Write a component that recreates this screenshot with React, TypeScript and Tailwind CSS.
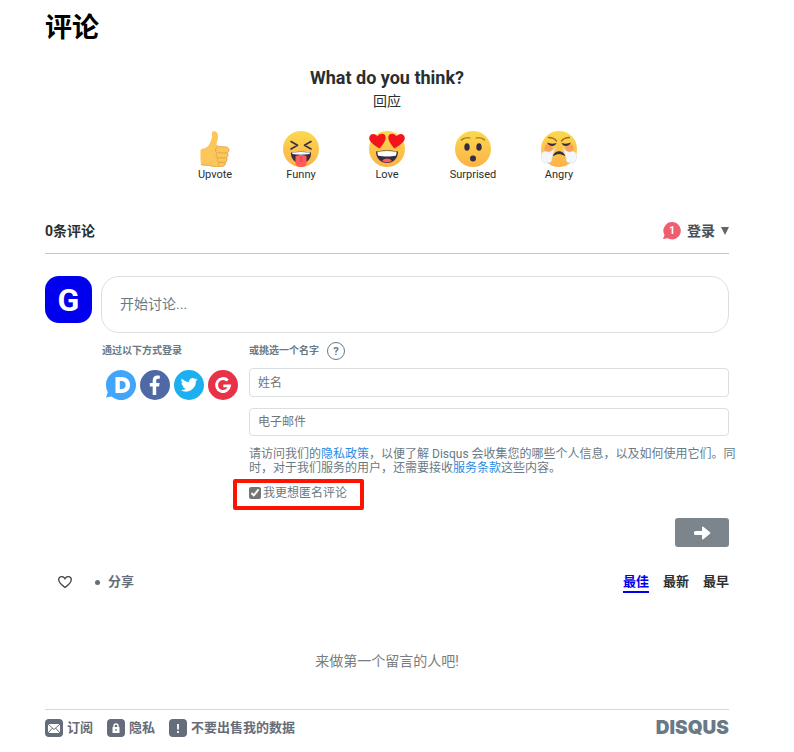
import React from "react";

function ThumbIcon() {
  return (
    <svg viewBox="0 0 36 36" className="size-9" aria-hidden="true">
      <path d="M3.500 19.500c0-1.500 2-1.800 4-2.300 4.200-1 6.100-6 7.300-10.500.6-2.400-.7-6.100 1.700-6.500 3.300-.5 4.800 2.600 4.500 6-.3 3.700-1.600 5.300-1.500 8.300 2 1.600 8 1 10 1.500 3.300.8 3 5 .7 5.800 1.500 1.500 1 4.200-.6 5 1 1.500.4 3.900-1.200 4.500.6 2.400-1 4.200-3.600 4.300-4.500.3-10 .2-12.600-1.100-3 0-5.200.2-7.200-.3C3.200 34 3.500 24 3.500 19.500Z" fill="#fbc65a" />
      <path d="M19.500 14.500c2 1.600 8 1 10 1.500 3.300.8 3 5 .7 5.800h-9M30.200 21.800c1.500 1.500 1 4.200-.6 5h-8.300M29.600 26.800c1 1.500.4 3.900-1.200 4.500h-6.800M28.400 31.300c.6 2.400-1 4.200-3.600 4.300-4.500.3-10 .2-12.600-1.100M20.500 16.500c-2.500.3-3 4.300-.2 5.200-2 1.300-1.500 4.400.7 5.100-1.300 1.500-.7 3.900.8 4.500-1.100 1.500-.3 3.700 1.200 4.300M4 33.500c2.500.8 5 .5 8.200 1" fill="none" stroke="#dca043" strokeWidth=".8" />
    </svg>
  );
}

function FaceBase({ id, children }: { id: string; children: React.ReactNode }) {
  return (
    <svg viewBox="0 0 36 36" className="size-9" aria-hidden="true">
      <defs>
        <linearGradient id={id} x1="0" y1="0" x2="0" y2="1">
          <stop offset="0" stopColor="#fbd94e" />
          <stop offset="1" stopColor="#fdb247" />
        </linearGradient>
      </defs>
      <circle cx="18" cy="18" r="18" fill={`url(#${id})`} />
      {children}
    </svg>
  );
}

function FunnyIcon() {
  return (
    <FaceBase id="funny">
      <path d="M8 10.500l6.500 3.800L8 18M28 10.500l-6.500 3.800L28 18" fill="none" stroke="#3b3040" strokeWidth="1.600" strokeLinejoin="round" strokeLinecap="round" />
      <path d="M8 21.500c6-1 14-1 20 0 .5 6-4 11-10 11S7.500 27.500 8 21.500Z" fill="#332c42" />
      <path d="M9 21.500c6-.8 12-.8 18 0l-.4 1.600c-5 .7-12.200.7-17.200 0Z" fill="#fff" />
      <path d="M12.500 25c3-1.500 8-1.500 11 0v7c0 5.300-11 5.300-11 0Z" fill="#ff5b5b" />
      <path d="M18 25v6" stroke="#d93d48" strokeWidth="1" />
    </FaceBase>
  );
}

function LoveIcon() {
  return (
    <FaceBase id="love">
      <path d="M10.500 17.500C5 14 0 11 .2 6.800.5 3 5.500 1.500 8.300 5.300c2.500-3.800 8-3.400 8.400.6.300 3.600-3 8-6.200 11.600ZM25.500 17.500C31 14 36 11 35.800 6.800 35.500 3 30.500 1.500 27.700 5.300c-2.500-3.800-8-3.400-8.400.6-.3 3.600 3 8 6.200 11.600Z" fill="#f6141c" />
      <path d="M7 20.500c6-1.500 16-1.500 22 0 0 7-5 11.500-11 11.500S7 27.500 7 20.500Z" fill="#332c42" />
      <path d="M8.500 20.700c6-1 13-1 19 0 .2 1.500-.2 3-.8 4-5 1-12.400 1-17.400 0-.6-1-1-2.500-.8-4Z" fill="#fff" />
      <path d="M13 29.700c3-3 7-3 10 0-3 2-7 2-10 0Z" fill="#ff5b5b" />
    </FaceBase>
  );
}

function SurprisedIcon() {
  return (
    <FaceBase id="surprised">
      <path d="M6.500 9c2-2 5-2.600 8.500-2M29.500 9c-2-2-5-2.600-8.500-2" fill="none" stroke="#9b6c1e" strokeWidth="1.200" strokeLinecap="round" />
      <ellipse cx="12" cy="16" rx="2.700" ry="3.800" fill="#332c42" />
      <ellipse cx="24" cy="16" rx="2.700" ry="3.800" fill="#332c42" />
      <circle cx="18" cy="27.500" r="3" fill="#332c42" />
    </FaceBase>
  );
}

function AngryIcon() {
  return (
    <FaceBase id="angry">
      <circle cx="7.500" cy="17" r="4" fill="#f98b62" opacity=".65" />
      <circle cx="28.500" cy="17" r="4" fill="#f98b62" opacity=".65" />
      <path d="M7.500 6.500c3.500 0 6 1 8 3.500M28.500 6.500c-3.500 0-6 1-8 3.500" fill="none" stroke="#9b6c1e" strokeWidth="1.300" strokeLinecap="round" />
      <path d="M6 11.500c2.500 1.300 6 1.500 9.500.5-1.500 4-7.500 4-9.500-.5ZM30 11.500c-2.500 1.300-6 1.500-9.500.5 1.500 4 7.500 4 9.500-.5Z" fill="#332c42" />
      <path d="M14.500 16.500c-2 2-5 5-7.500 4.500-2.500-1.500-6.500-.5-6 2.500-1.500 1.500-1 4 0 5C1 31 4 33 6.500 31.500c3 1 5-1.500 4.300-4C12 24 12.500 20.500 14.500 16.500ZM21.500 16.500c2 2 5 5 7.500 4.500 2.500-1.500 6.500-.5 6 2.500 1.500 1.500 1 4 0 5C35 31 32 33 29.500 31.500c-3 1-5-1.500-4.300-4C24 24 23.500 20.500 21.500 16.500Z" fill="#f4f6fa" stroke="#ccd5e0" strokeWidth=".5" />
      <path d="M12.500 24.500c1.500-5 9.500-5 11 0-3.500-2.500-7.500-2.500-11 0Z" fill="#332c42" stroke="#332c42" />
    </FaceBase>
  );
}

const reactions = [
  { label: "Upvote", Icon: ThumbIcon },
  { label: "Funny", Icon: FunnyIcon },
  { label: "Love", Icon: LoveIcon },
  { label: "Surprised", Icon: SurprisedIcon },
  { label: "Angry", Icon: AngryIcon },
];

const socials = [
  {
    name: "Disqus",
    body: (
      <>
        <path d="M15 0a15 15 0 1 1-9.500 26.600L0 27.500l1.800-5.200A15 15 0 0 1 15 0Z" fill="#42a5fc" />
        <path fillRule="evenodd" d="M9.500 7h6c5.300 0 8.500 3.200 8.500 8s-3.300 8-8.600 8H9.500Zm4.300 3.900v8.200h1.800c2.500 0 4-1.500 4-4.100s-1.500-4.100-4-4.100Z" fill="#fff" />
      </>
    ),
  },
  {
    name: "Facebook",
    body: (
      <>
        <circle cx="15" cy="15" r="15" fill="#5068a6" />
        <path d="M12.700 25v-8.600H9.800V13h2.900v-2.500c0-3.200 1.900-4.900 4.700-4.900 1 0 1.800.1 2.400.2v3h-1.700c-1.500 0-1.900.8-1.900 1.900V13h3.400l-.5 3.400h-2.900V25Z" fill="#fff" />
      </>
    ),
  },
  {
    name: "Twitter",
    body: (
      <>
        <circle cx="15" cy="15" r="15" fill="#1cb0f0" />
        <path transform="translate(6.800 6.400) scale(.7)" d="M24 4.560c-.9.400-1.800.7-2.800.8a4.900 4.900 0 0 0 2.200-2.700c-1 .6-2 1-3.100 1.200a4.920 4.920 0 0 0-8.400 4.500C7.700 8.100 4.100 6.100 1.700 3.100a4.900 4.900 0 0 0 1.500 6.600c-.8 0-1.600-.3-2.200-.6a4.900 4.900 0 0 0 3.900 4.900c-.7.200-1.500.2-2.200.1a4.900 4.900 0 0 0 4.600 3.400A9.900 9.900 0 0 1 0 19.500a14 14 0 0 0 21.500-12.400c1-.7 1.800-1.600 2.500-2.500Z" fill="#fff" />
      </>
    ),
  },
  {
    name: "Google",
    body: (
      <>
        <circle cx="15" cy="15" r="15" fill="#e73248" />
        <path d="M19.700 10.500A6.500 6.500 0 1 0 21.500 15.900H15.300" fill="none" stroke="#fff" strokeWidth="2.900" />
      </>
    ),
  },
];

const footerLinks = [
  {
    label: "订阅",
    icon: (
      <>
        <path d="M3 5h12v9H3Z" fill="#fff" />
        <path d="M3 5l6 5.500L15 5M3 14l4.500-5M15 14l-4.500-5" fill="none" stroke="#656c7a" strokeWidth="1" />
      </>
    ),
  },
  {
    label: "隐私",
    icon: (
      <>
        <rect x="5.500" y="8" width="7" height="6" rx=".5" fill="#fff" />
        <path d="M7 8.500V7a2 2 0 0 1 4 0v1.500" fill="none" stroke="#fff" strokeWidth="1.400" />
        <path d="M9 10v2" stroke="#656c7a" strokeWidth="1.200" />
      </>
    ),
  },
  {
    label: "不要出售我的数据",
    icon: <path d="M9 5v5.500M9 12v2" stroke="#fff" strokeWidth="1.800" />,
  },
];

const inputClass =
  "block w-full rounded border border-[#dbdfe4] bg-white px-2 text-xs text-[#3f4549] outline-none placeholder:text-[#757575]";

export default function App() {
  return (
    <main className="bg-white pr-[65px] pl-[45px] font-['Roboto','Noto_Sans_CJK_SC',sans-serif] text-[#2a2e2e]">
      <h1 className="pt-2 text-[27px] leading-10 font-bold text-black">评论</h1>

      <section className="pt-4 text-center">
        <h2 className="text-lg leading-7 font-bold">What do you think?</h2>
        <p className="text-sm leading-[18px]">回应</p>
        <div className="mt-[21px] flex justify-center">
          {reactions.map(({ label, Icon }) => (
            <button key={label} className="flex w-[86px] flex-col items-center text-[11px] leading-4">
              <Icon />
              {label}
            </button>
          ))}
        </div>
      </section>

      <header className="mt-[35px] box-content flex h-[26px] items-center justify-between border-b border-[#c2c6cc] pb-[9px] leading-5">
        <h2 className="text-sm font-bold">0条评论</h2>
        <button className="flex items-center text-sm font-bold text-[#494e58]">
          <span className="relative mr-1.5 flex size-[18px] items-center justify-center text-[10px] leading-none font-bold text-white">
            <svg viewBox="0 0 18 18" className="absolute inset-0 size-full" aria-hidden="true">
              <path d="M9.500 0a8.700 8.700 0 1 1-4.800 16.200L0 17l1.500-4A8.800 8.800 0 0 1 9.500 0Z" fill="#f05f70" />
            </svg>
            <span className="relative">1</span>
          </span>
          登录
          <svg viewBox="0 0 8 8" className="ml-1.5 size-2" aria-hidden="true">
            <path d="M0 0h8L4 8Z" fill="#656565" />
          </svg>
        </button>
      </header>

      <form className="mt-[22px]" onSubmit={(e) => e.preventDefault()}>
        <div className="flex gap-[9px]">
          <div className="flex size-[47px] items-center justify-center rounded-[14px] bg-[#0000ee] text-[32px] leading-none font-bold text-white">
            G
          </div>
          <textarea
            aria-label="开始讨论"
            placeholder="开始讨论..."
            className="h-[57px] flex-1 resize-none rounded-[18px] border border-[#dbdfe4] px-[18px] py-[17px] text-sm leading-5 outline-none placeholder:text-[#687a86]"
          />
        </div>

        <div className="flex pt-2 pl-[57px]">
          <section className="w-[147px] shrink-0">
            <h3 className="text-[10px] leading-5 font-bold text-[#687a86]">通过以下方式登录</h3>
            <div className="mt-[9px] ml-1 flex gap-1">
              {socials.map((s) => (
                <button key={s.name} type="button" aria-label={s.name}>
                  <svg viewBox="0 0 30 30" className="size-[30px] overflow-visible" aria-hidden="true">
                    {s.body}
                  </svg>
                </button>
              ))}
            </div>
          </section>

          <section className="min-w-0 flex-1">
            <div className="flex h-5 items-center">
              <h3 className="text-[10px] leading-5 font-bold text-[#687a86]">或挑选一个名字</h3>
              <button
                type="button"
                aria-label="帮助"
                className="ml-2 flex size-[18px] items-center justify-center rounded-full border border-[#687a86] text-[11px] leading-none font-bold text-[#687a86]"
              >
                ?
              </button>
            </div>
            <input aria-label="姓名" placeholder="姓名" className={`${inputClass} mt-[7px] h-[29px]`} />
            <input aria-label="电子邮件" type="email" placeholder="电子邮件" className={`${inputClass} mt-[11px] h-7`} />
            <p className="mt-[11px] text-xs leading-[14px] whitespace-nowrap text-[#687a86]">
              请访问我们的<a href="#privacy" className="text-[#288ce4]">隐私政策</a>，以便了解 Disqus 会收集您的哪些个人信息，以及如何使用它们。同
              <br />
              时，对于我们服务的用户，还需要接收<a href="#terms" className="text-[#288ce4]">服务条款</a>这些内容。
            </p>
            <div className="relative mt-2 flex h-5 items-center">
              <label className="flex items-center gap-0.5 text-xs leading-5 text-[#687a86]">
                <input type="checkbox" defaultChecked className="size-3 accent-[#757575]" />
                我更想匿名评论
              </label>
              <div className="pointer-events-none absolute -top-1 -left-4 h-[31px] w-[131px] rounded-xs border-4 border-[#fe1300]" />
            </div>
            <div className="mt-[15px] flex justify-end">
              <button aria-label="发布" className="flex h-[29px] w-[54px] items-center justify-center rounded-[3px] bg-[#7b858b]">
                <svg viewBox="0 0 17 14" className="h-3.5 w-[17px]" aria-hidden="true">
                  <path d="M1.500 5H8V1.500Q8 0 9.300.8L16 6.300q.8.700 0 1.400L9.300 13.200Q8 14 8 12.500V9H1.500Q0 9 0 7.500v-1Q0 5 1.500 5Z" fill="#fff" />
                </svg>
              </button>
            </div>
          </section>
        </div>
      </form>

      <nav className="mt-[26px] flex items-start justify-between text-[13px] leading-[18px] font-bold">
        <div className="flex items-center pl-3 text-[#656c7a]">
          <button aria-label="喜欢">
            <svg viewBox="0 0 16 14" className="h-3.5 w-4" aria-hidden="true">
              <path d="M8 12.500C4 9.500 1.700 7.500 1.700 4.700 1.700 1.300 6.300.3 8 3.700 9.700.3 14.300 1.300 14.300 4.700 14.300 7.500 12 9.500 8 12.500Z" fill="none" stroke="#3f4549" strokeWidth="1.300" />
            </svg>
          </button>
          <button className="ml-[22px] flex items-center gap-2">
            <span className="size-[5px] rounded-full bg-[#656c7a]" />
            分享
          </button>
        </div>
        <div className="flex gap-3.5">
          <button className="border-b-2 border-[#0000ee] text-[#0000ee]">最佳</button>
          <button className="self-start">最新</button>
          <button className="self-start">最早</button>
        </div>
      </nav>

      <p className="pt-[58px] pb-[38px] text-center text-sm leading-5 text-[#777d80]">来做第一个留言的人吧!</p>

      <footer className="flex items-center justify-between border-t border-[#d5d7dc] pt-2 text-[13px] leading-5 font-bold text-[#656c7a]">
        <div className="flex gap-3.5">
          {footerLinks.map((l) => (
            <a key={l.label} href="#footer" className="flex items-center gap-1">
              <svg viewBox="0 0 18 18" className="size-[18px]" aria-hidden="true">
                <rect width="18" height="18" rx="4" fill="#656c7a" />
                {l.icon}
              </svg>
              {l.label}
            </a>
          ))}
        </div>
        <a href="#disqus" className="font-['Inter',sans-serif] text-[19px] font-black text-[#687a86]">
          DISQUS
        </a>
      </footer>
    </main>
  );
}
